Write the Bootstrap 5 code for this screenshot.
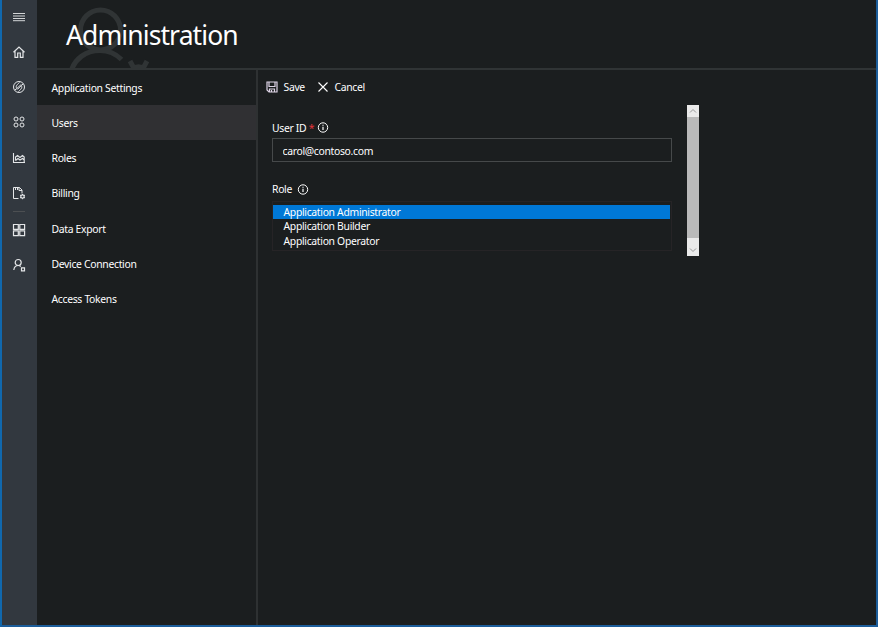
<!DOCTYPE html>
<html lang="en" data-bs-theme="dark">
<head>
<meta charset="utf-8">
<meta name="viewport" content="width=device-width, initial-scale=1">
<title>Administration</title>
<link href="https://cdn.jsdelivr.net/npm/bootstrap@5.3.0/dist/css/bootstrap.min.css" rel="stylesheet">
<style>
body{background:#1b1e1f;color:#fff;font:10.4px/15px "Noto Sans","Open Sans",sans-serif;letter-spacing:-.32px;overflow:hidden}
.shell{height:627px;border:solid #1c5d9a;border-width:0 2px 2px 2px;border-left-color:#1068ad}
.rail{width:35px;background:#32383f;flex:none;padding-right:2px}
.rail a{height:35.3px;color:#e4e6e8}
.rail a:first-child{height:34px}
.rail hr{width:12px;margin:1px auto 0;border-color:#666;opacity:.5}
.rail svg,.tool svg,.info{fill:none;stroke:currentColor}
.page-head{height:70px;border-bottom:2px solid #303435;overflow:hidden;padding:15px 0 0 29px}
.page-head h1{font-size:26.5px;line-height:40px;letter-spacing:-.9px;font-weight:400}
.ghost{left:28px;top:0;fill:none;stroke:#303435}
.side{width:221px;border-right:2px solid #2e3132;flex:none}
.side .nav-link{height:35.3px;padding:2px 0 0 14.5px;color:#fff;border-radius:0}
.side .nav-link.active{background:#303033}
.side .nav-link:first-child{height:34.7px}
.tool{height:34.5px;padding-left:8px}
.save-label{margin-left:5.5px;width:33.5px}
.cancel-label{margin-left:5.5px}
.fields{width:400px;margin-left:14px;height:151px;padding-top:16px}
.fields label{height:15px}
.field-id{margin-bottom:2.5px}
.field-role{margin:20px 0 4px}
.req{color:#e2343b;margin-left:2.5px}
.info{margin-left:3px}
.field-role .info{margin-left:5px}
.fields .form-control{height:24px;background:transparent;border:1px solid #46494a;border-radius:0;color:#fff;font-size:10.4px;padding:1px 9.500px 0;letter-spacing:inherit}
.roles{border:1px solid #262426;padding:3px 1px 1px 0;height:50px}
.roles .list-group-item{height:14.3px;line-height:14.3px;padding:0 10.5px;border:0;background:transparent;color:#fff}
.roles .list-group-item.active{background:#0078d7;margin:0}
.scroller{width:12px;height:151px;margin-left:15px;background:#bababa}
.scroller span{background:#eaeaea;width:12px}
.scroller svg{fill:none;stroke:#999}
</style>
<script src="https://cdn.jsdelivr.net/npm/bootstrap@5.3.0/dist/js/bootstrap.bundle.min.js"></script>
</head>
<body>
<div class="shell d-flex">
  <nav class="rail d-flex flex-column">
    <a class="d-flex align-items-center justify-content-center"><svg width="14" height="14"><path d="M1 3.500h12M1 6h12M1 8.500h12M1 10.700h12" stroke-width=".9"/></svg></a>
    <a class="d-flex align-items-center justify-content-center"><svg width="14" height="14"><path d="M1.500 7.300 7 2l5.500 5.300M3 6v6.300h2.700V8h2.600v4.300H11V6" stroke-width="1.200"/></svg></a>
    <a class="d-flex align-items-center justify-content-center"><svg width="14" height="14"><circle cx="7" cy="7" r="5.500"/><path d="M2.700 10 5 8.500C3.500 7 4 5.500 7.500 2.500M11.300 4 9 5.500C10.500 7 10 8.500 6.500 11.500M4.800 8.500 8.800 4.800M5.500 9.300 9.300 5.600"/></svg></a>
    <a class="d-flex align-items-center justify-content-center"><svg width="14" height="14"><circle cx="4" cy="4" r="2"/><circle cx="10" cy="4" r="2"/><circle cx="4" cy="10" r="2"/><circle cx="10" cy="10" r="2"/></svg></a>
    <a class="d-flex align-items-center justify-content-center"><svg width="14" height="14"><path d="M1.500 2v9.500h11.500M3.500 9.500V6l2-1.500L8 6.500l2.500-2L12.200 6v5.500M3.500 9.500 6 7.500 8 9l2.500-1.500 1.700 1.500" stroke-width="1.100"/></svg></a>
    <a class="d-flex align-items-center justify-content-center"><svg width="14" height="14"><path d="M6.500 12.500H1.500V1.500H7.500L10 4v3.500M7 1.500V4.500h3M3.500 2v2M5.500 2v2"/><circle cx="10.500" cy="10.500" r="1.700" stroke-width="1.200"/><path d="M10.500 8v1M10.500 12.200v1M8 9l1 .7M12 11.300l1 .7M13 9l-1 .7M9 11.300l-1 .7"/></svg></a>
    <hr>
    <a class="d-flex align-items-center justify-content-center"><svg width="14" height="14" stroke="#e8dce8"><path d="M1.500 1.500h4.800v4.800H1.500zM7.800 1.500h4.800v4.800H7.800zM1.500 7.800h4.800v4.800H1.500zM7.800 7.800h4.800v4.800H7.800z" stroke-width="1.200"/></svg></a>
    <a class="d-flex align-items-center justify-content-center"><svg width="14" height="14"><circle cx="6.200" cy="4.500" r="3" stroke-width="1.200"/><path d="M1.800 12C2.200 9 4 7.500 6.200 7.500c1 0 1.900.4 2.600 1" stroke-width="1.200"/><path d="M9.500 9.800h3v3h-3z" stroke-width="1.200"/></svg></a>
  </nav>
  <div class="flex-grow-1 d-flex flex-column">
    <header class="page-head position-relative">
      <svg class="ghost position-absolute" width="90" height="69"><circle cx="35.500" cy="30" r="20" stroke-width="5"/><path d="M6 72C9 59 21 50.500 35 50.500c8.500 0 16 3.500 21.500 9" stroke-width="5"/><path d="M65 61l4 7.500M82 61l-4 7.500M68 69c3-3 8-3 11 0" stroke-width="5"/></svg>
      <h1 class="position-relative m-0">Administration</h1>
    </header>
    <div class="d-flex flex-grow-1">
      <nav class="side nav flex-column">
        <a class="nav-link d-flex align-items-center">Application Settings</a>
        <a class="nav-link active d-flex align-items-center">Users</a>
        <a class="nav-link d-flex align-items-center">Roles</a>
        <a class="nav-link d-flex align-items-center">Billing</a>
        <a class="nav-link d-flex align-items-center">Data Export</a>
        <a class="nav-link d-flex align-items-center">Device Connection</a>
        <a class="nav-link d-flex align-items-center">Access Tokens</a>
      </nav>
      <main class="flex-grow-1">
        <div class="tool d-flex align-items-center">
          <svg width="12" height="12"><path d="M1 1h10v10H3L1 9zM3 1v4.500h6V1M3.500 11V8h5v3M5.500 9v2" stroke="#ded4e6" stroke-width="1.200"/></svg><span class="save-label">Save</span>
          <svg width="12" height="12"><path d="M1.500 1.500l9 9M10.500 1.500l-9 9" stroke-width="1.100"/></svg><span class="cancel-label">Cancel</span>
        </div>
        <div class="d-flex">
          <form class="fields">
            <label class="field-id d-flex align-items-center" for="uid">User ID<span class="req">*</span><svg class="info" width="12" height="12"><circle cx="6" cy="5.500" r="4.700"/><path d="M6 4.800v3.200M6 2.700v1.100" stroke-width="1.200"/></svg></label>
            <input id="uid" class="form-control" value="carol@contoso.com">
            <label class="field-role d-flex align-items-center">Role<svg class="info" width="12" height="12"><circle cx="6" cy="5.500" r="4.700"/><path d="M6 4.800v3.200M6 2.700v1.100" stroke-width="1.200"/></svg></label>
            <div class="roles list-group rounded-0">
              <div class="list-group-item active">Application Administrator</div>
              <div class="list-group-item">Application Builder</div>
              <div class="list-group-item">Application Operator</div>
            </div>
          </form>
          <div class="scroller d-flex flex-column justify-content-between">
            <span class="d-flex"><svg width="12" height="12"><path d="M3 7.500 6 4.500l3 3"/></svg></span>
            <span class="d-flex align-items-end pt-1"><svg width="12" height="14"><path d="M3 6.500l3 3 3-3"/></svg></span>
          </div>
        </div>
      </main>
    </div>
  </div>
</div>
</body>
</html>
